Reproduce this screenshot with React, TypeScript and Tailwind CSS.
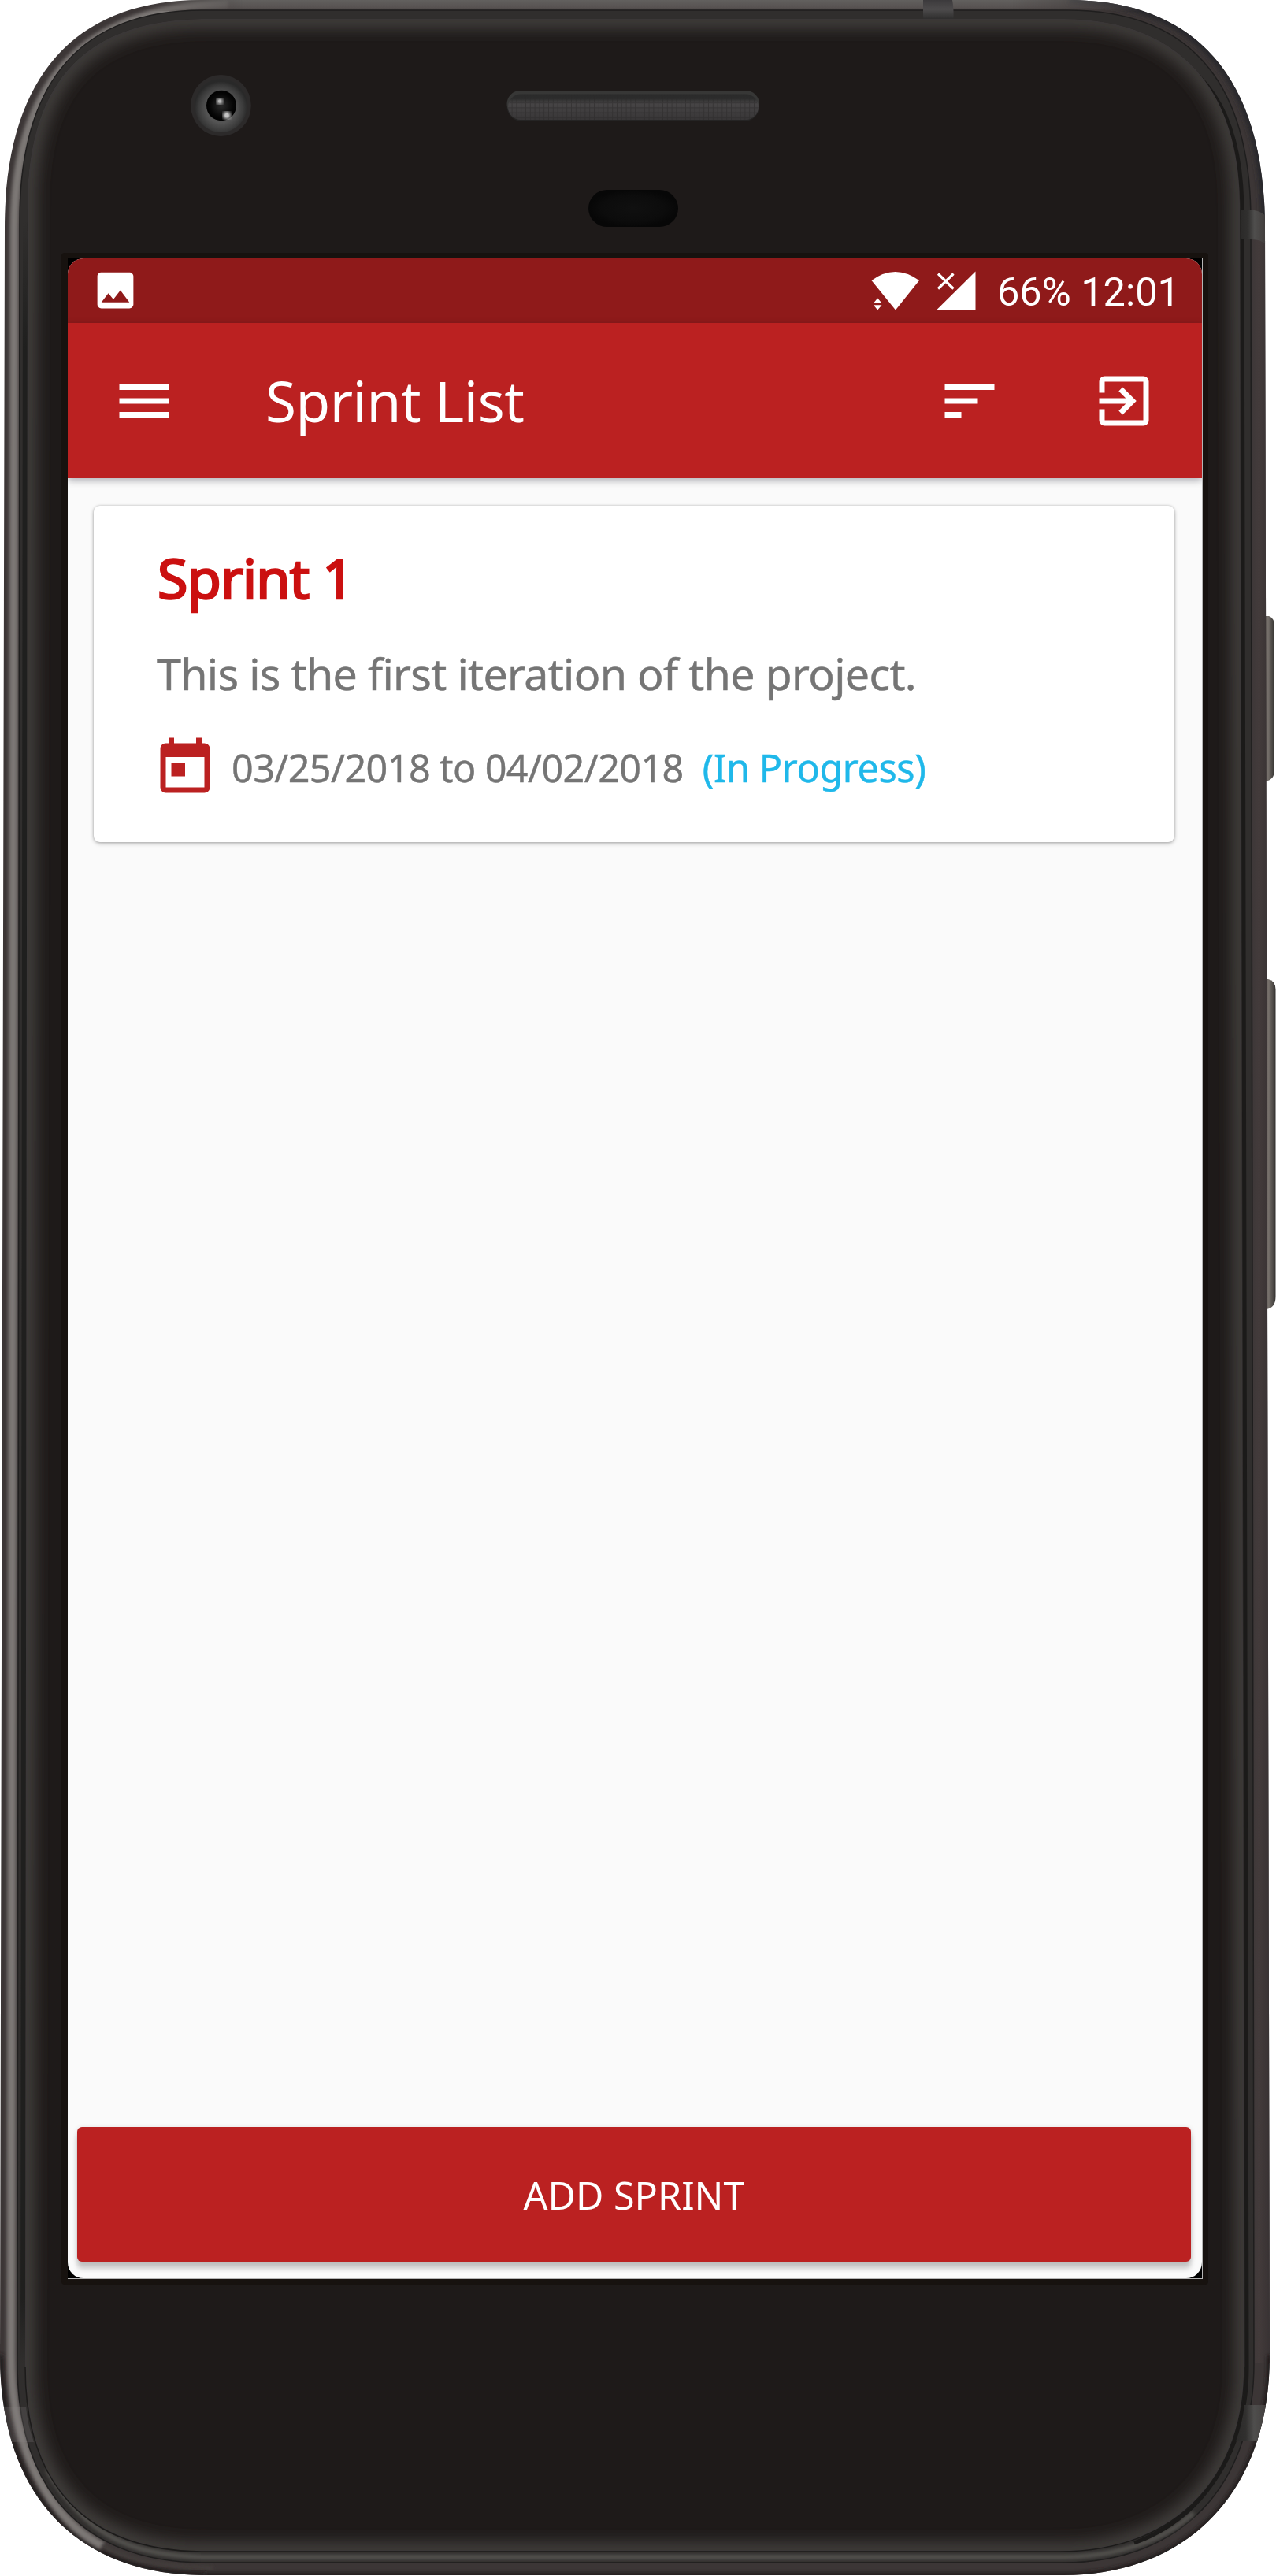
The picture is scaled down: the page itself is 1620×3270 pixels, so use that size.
import { MdExitToApp, MdImage, MdMenu, MdSort, MdToday } from "react-icons/md";

const OUTER =
  "M256 0H1356C1515 0 1606 95 1606 290L1612 2990C1612 3165 1506 3269 1350 3269H260C100 3269 0 3170 0 2990L6 290C6 95 97 0 256 0Z";
const MIDDLE =
  "M258 13H1356C1505 13 1588 98 1588 280L1592 3000C1592 3155 1500 3253 1350 3253H260C105 3253 22 3160 22 3000L25 280C25 98 107 13 258 13Z";
const PANEL =
  "M262 24H1350C1492 24 1574 108 1574 262L1580 3005C1580 3138 1500 3239 1345 3239H260C105 3239 32 3150 32 3005L35 262C35 100 112 24 262 24Z";

/* Handset body: metal rim, inner bevel, glass, camera, speaker and side keys. */
function Chassis() {
  return (
    <svg className="absolute inset-0" width="1620" height="3270" viewBox="0 0 1620 3270" fill="none" aria-hidden="true">
      <defs>
        <clipPath id="outerClip"><path d={OUTER} /></clipPath>
        <clipPath id="panelClip"><path d={PANEL} /></clipPath>
        <filter id="soft2" x="-5%" y="-5%" width="110%" height="110%"><feGaussianBlur stdDeviation="2" /></filter>
        <filter id="soft3" x="-5%" y="-5%" width="110%" height="110%"><feGaussianBlur stdDeviation="3" /></filter>
        <filter id="soft9" x="-5%" y="-5%" width="110%" height="110%"><feGaussianBlur stdDeviation="10" /></filter>
        <linearGradient id="topRim" x1="0" y1="0" x2="0" y2="14" gradientUnits="userSpaceOnUse">
          <stop stopColor="#62605e" /><stop offset="0.7" stopColor="#575251" /><stop offset="1" stopColor="#3d3838" />
        </linearGradient>
        <linearGradient id="topFade" x1="180" y1="0" x2="1480" y2="0" gradientUnits="userSpaceOnUse">
          <stop stopColor="#fff" stopOpacity="0" /><stop offset="0.1" stopColor="#fff" /><stop offset="0.85" stopColor="#fff" /><stop offset="1" stopColor="#fff" stopOpacity="0" />
        </linearGradient>
        <mask id="topMask"><rect x="150" y="0" width="1350" height="60" fill="url(#topFade)" /></mask>
        <linearGradient id="rightRim" x1="1585" y1="0" x2="1612" y2="0" gradientUnits="userSpaceOnUse">
          <stop stopColor="#3b3637" /><stop offset="0.5" stopColor="#433b3b" /><stop offset="1" stopColor="#383233" />
        </linearGradient>
        <linearGradient id="bevelFade" x1="0" y1="280" x2="0" y2="3000" gradientUnits="userSpaceOnUse">
          <stop stopColor="#1f1f1e" stopOpacity="0" /><stop offset="0.06" stopColor="#1f1f1e" /><stop offset="0.97" stopColor="#1f1f1e" /><stop offset="1" stopColor="#1f1f1e" stopOpacity="0" />
        </linearGradient>
        <linearGradient id="key" x1="0" y1="0" x2="1" y2="0">
          <stop stopColor="#45413d" /><stop offset="0.55" stopColor="#77716c" /><stop offset="1" stopColor="#33312f" />
        </linearGradient>
        <linearGradient id="strapV" x1="0" y1="0" x2="0" y2="1">
          <stop stopColor="#3c3a3c" /><stop offset="0.5" stopColor="#4d4b4c" /><stop offset="1" stopColor="#2f2e2e" />
        </linearGradient>
        <linearGradient id="strapH" x1="0" y1="0" x2="1" y2="0">
          <stop stopColor="#2b2a29" /><stop offset="0.3" stopColor="#31302f" /><stop offset="0.55" stopColor="#4f4e4d" /><stop offset="1" stopColor="#413d3c" />
        </linearGradient>
        <radialGradient id="lens" cx="0.5" cy="0.55" r="0.5">
          <stop offset="0.55" stopColor="#545454" /><stop offset="0.85" stopColor="#3a3a3a" /><stop offset="1" stopColor="#292929" />
        </radialGradient>
        <radialGradient id="pupil"><stop stopColor="#2a2a2a" /><stop offset="0.75" stopColor="#060606" /><stop offset="1" stopColor="#000" /></radialGradient>
        <linearGradient id="speaker" x1="0" y1="0" x2="0" y2="1">
          <stop stopColor="#2a2a2a" /><stop offset="0.18" stopColor="#2c2c2c" /><stop offset="0.35" stopColor="#474546" /><stop offset="1" stopColor="#383637" />
        </linearGradient>
        <pattern id="mesh" width="5.8" height="6.2" patternUnits="userSpaceOnUse">
          <path d="M0 .5H6M.5 0V6.2" stroke="#2b2a2a" strokeOpacity="0.55" />
        </pattern>
        <radialGradient id="sensor"><stop stopColor="#101010" /><stop offset="0.7" stopColor="#0c0c0c" /><stop offset="1" stopColor="#070707" /></radialGradient>
      </defs>

      <path d="M1600 782H1611Q1618 784 1618 796V978Q1618 990 1606 992H1600Z" fill="url(#key)" />
      <path d="M1600 1243H1610Q1619.500 1245 1619.500 1256V1646Q1619.500 1660 1608 1662H1600Z" fill="url(#key)" />

      <path d={OUTER} fill="#3c3636" />
      <g clipPath="url(#outerClip)">
        <rect x="1585" y="300" width="30" height="2700" fill="url(#rightRim)" />
        <path d="M1606 290C1606 95 1515 0 1356 0" stroke="#26262c" strokeWidth="10" filter="url(#soft3)" />
        <path d="M260 3269H1350C1506 3269 1612 3165 1612 2990" stroke="#221f1f" strokeWidth="7" filter="url(#soft2)" />
        <path d="M0 2990C0 3170 100 3269 260 3269" stroke="#221f1f" strokeWidth="10" filter="url(#soft3)" />
        <path d="M290 6C110 8 19 100 18 290L14 2990C14 3120 70 3200 130 3232" stroke="#7b7775" strokeWidth="11" filter="url(#soft2)" />
        <path d="M130 3232C165 3250 205 3259 270 3260" stroke="#443f3e" strokeWidth="5" filter="url(#soft2)" />
        <rect x="150" y="0" width="1350" height="14" fill="url(#topRim)" mask="url(#topMask)" />
      </g>

      <path d={MIDDLE} fill="#302e2d" stroke="#1f1e1e" strokeWidth="1.500" />
      <path d="M26 3000L29 280H35L32 3005Z" fill="url(#bevelFade)" />
      <path d="M60 3135C108 3218 165 3245 262 3246H1345C1425 3246 1480 3222 1515 3190" stroke="#555350" strokeWidth="6" filter="url(#soft2)" />
      <path d="M1430 45C1530 75 1577 140 1577 270L1583 3005C1583 3110 1530 3195 1440 3228" stroke="#1b1a19" strokeWidth="5" />

      <path d={PANEL} fill="#1e1a19" />
      <g clipPath="url(#panelClip)">
        <path d={PANEL} stroke="#454240" strokeWidth="22" filter="url(#soft9)" />
      </g>
      <path d="M32 3005C32 3150 105 3239 260 3239H1345C1500 3239 1580 3138 1580 3005" stroke="#1c1b1a" strokeWidth="1.500" />

      <path d="M1172 0H1209Q1211 10 1210.500 24H1172Z" fill="url(#strapV)" />
      <g clipPath="url(#outerClip)">
        <path d="M1575 267H1592Q1600 268 1607 274V310Q1600 304 1590 304H1576Z" fill="url(#strapH)" />
        <path d="M3 3055H33Q35 3078 43 3100H12Q5 3080 3 3055Z" fill="#8c8a88" fillOpacity="0.22" />
        <path d="M1580 3053H1611L1603 3099H1569Q1577 3078 1580 3053Z" fill="url(#strapH)" />
      </g>

      <ellipse cx="280.500" cy="134" rx="38.300" ry="39" fill="#2c2a2a" />
      <ellipse cx="280.500" cy="134" rx="33.500" ry="34" fill="url(#lens)" />
      <ellipse cx="281" cy="134" rx="19" ry="19.300" fill="url(#pupil)" />
      <circle cx="279" cy="128.500" r="4" fill="#c8c8c8" filter="url(#soft2)" />
      <circle cx="279" cy="128.500" r="2" fill="#b9b9b9" />
      <circle cx="288" cy="146.500" r="5" fill="#d0d0d0" filter="url(#soft2)" />
      <circle cx="288" cy="146.500" r="2.500" fill="#c4c4c4" />

      <rect x="643.500" y="115" width="320.500" height="39" rx="19" fill="#252424" />
      <rect x="643.500" y="115" width="320.500" height="34" rx="17" fill="#373736" />
      <rect x="645" y="119.500" width="318" height="32.500" rx="16" fill="url(#speaker)" />
      <rect x="645" y="122" width="318" height="30" rx="15" fill="url(#mesh)" />
      <rect x="747" y="241" width="114" height="47" rx="23.500" fill="url(#sensor)" />
    </svg>
  );
}

function StatusBar() {
  return (
    <div className="flex h-[82px] items-center bg-[#8f1a1a] pr-[28px] pl-[30px] text-white">
      <MdImage className="-mt-0.5 size-[61px]" />
      <svg className="ml-auto h-[54px] w-[134px]" viewBox="1105 342 134 54" fill="currentColor" aria-hidden="true">
        <path d="M1106.500 356Q1136.500 334 1167 356L1137 393.500Z" />
        <path d="M1114.200 378.500L1119.500 384.800H1109ZM1114.200 393.500L1119.500 387.300H1109Z" />
        <path d="M1238.500 344.500V394H1188.500Z" />
        <path d="M1191 347.500L1210.500 366.500M1210.500 347.500L1191 366.500" stroke="#8f1a1a" strokeWidth="7" />
        <path d="M1191 347.500L1210.500 366.500M1210.500 347.500L1191 366.500" stroke="currentColor" strokeWidth="3.200" />
      </svg>
      <span className="mt-[3px] ml-[27px] font-['Roboto',sans-serif] text-[50.500px] leading-[60px] whitespace-pre">
        66% 12:01
      </span>
    </div>
  );
}

function AppBar() {
  return (
    <header className="relative flex h-[197px] items-center bg-[#bb2121] pr-[57px] pl-[55px] text-white shadow-[0_3px_9px_rgba(0,0,20,0.3)]">
      <MdMenu className="size-[84px]" />
      <h1 className="ml-[112px] text-[71px] leading-[96px] tracking-[-0.450px]">Sprint List</h1>
      <MdSort className="ml-auto size-[84px]" />
      <MdExitToApp className="ml-28 size-[84px]" />
    </header>
  );
}

function SprintCard() {
  return (
    <article className="mr-[35px] ml-[33px] mt-[35px] h-[427px] rounded-lg bg-white pt-[46px] pl-20 shadow-[0_2px_5px_rgba(0,0,0,0.25),0_0_3px_rgba(0,0,0,0.2)]">
      <h2 className="pl-px text-[70px] leading-[90px] tracking-[-0.800px] text-[#cb1010] [-webkit-text-stroke:2.600px_#cb1010]">Sprint 1</h2>
      <p className="mt-[42px] text-[55.500px] leading-[70px] tracking-[-0.660px] text-[#757575] [-webkit-text-stroke:0.500px_#757575]">
        This is the first iteration of the project.
      </p>
      <div className="mt-[43px] -ml-1.5 flex h-[84px] items-center text-[48.500px] leading-[66px]">
        <MdToday className="size-[84px] text-[#bb2121]" />
        <span className="-mt-[3px] ml-[17px] tracking-[-0.600px] text-[#757575] [-webkit-text-stroke:0.400px_#757575]">03/25/2018 to 04/02/2018</span>
        <span className="-mt-[3px] ml-[24px] tracking-[-0.380px] text-[#1fb8ea] [-webkit-text-stroke:0.500px_#1fb8ea]">(In Progress)</span>
      </div>
    </article>
  );
}

export default function App() {
  return (
    <div className="relative h-[3270px] w-[1620px] overflow-hidden bg-white font-['Noto_Sans','Open_Sans',sans-serif]">
      <Chassis />
      <div className="relative pt-[321px] pl-[78px]">
        <div className="h-[2579px] w-[1456px] rounded-[4px] bg-[#17120f] pt-[7px] pl-2">
          <div className="h-[2565px] w-[1441px] border-r border-b border-[#b5b5b5] bg-black">
            <div className="flex h-full flex-col overflow-hidden rounded-[20px] bg-[#fafafa]">
              <StatusBar />
              <AppBar />
              <main className="flex flex-1 flex-col">
                <SprintCard />
                <button className="mt-auto mr-[14px] mb-[21px] ml-[12px] h-[171px] rounded-md bg-[#bb2121] text-[48.500px] leading-[66px] text-white shadow-[0_9px_6px_rgba(0,0,0,0.2),0_1px_7px_rgba(0,0,0,0.12)]">
                  ADD SPRINT
                </button>
              </main>
            </div>
          </div>
        </div>
      </div>
    </div>
  );
}
